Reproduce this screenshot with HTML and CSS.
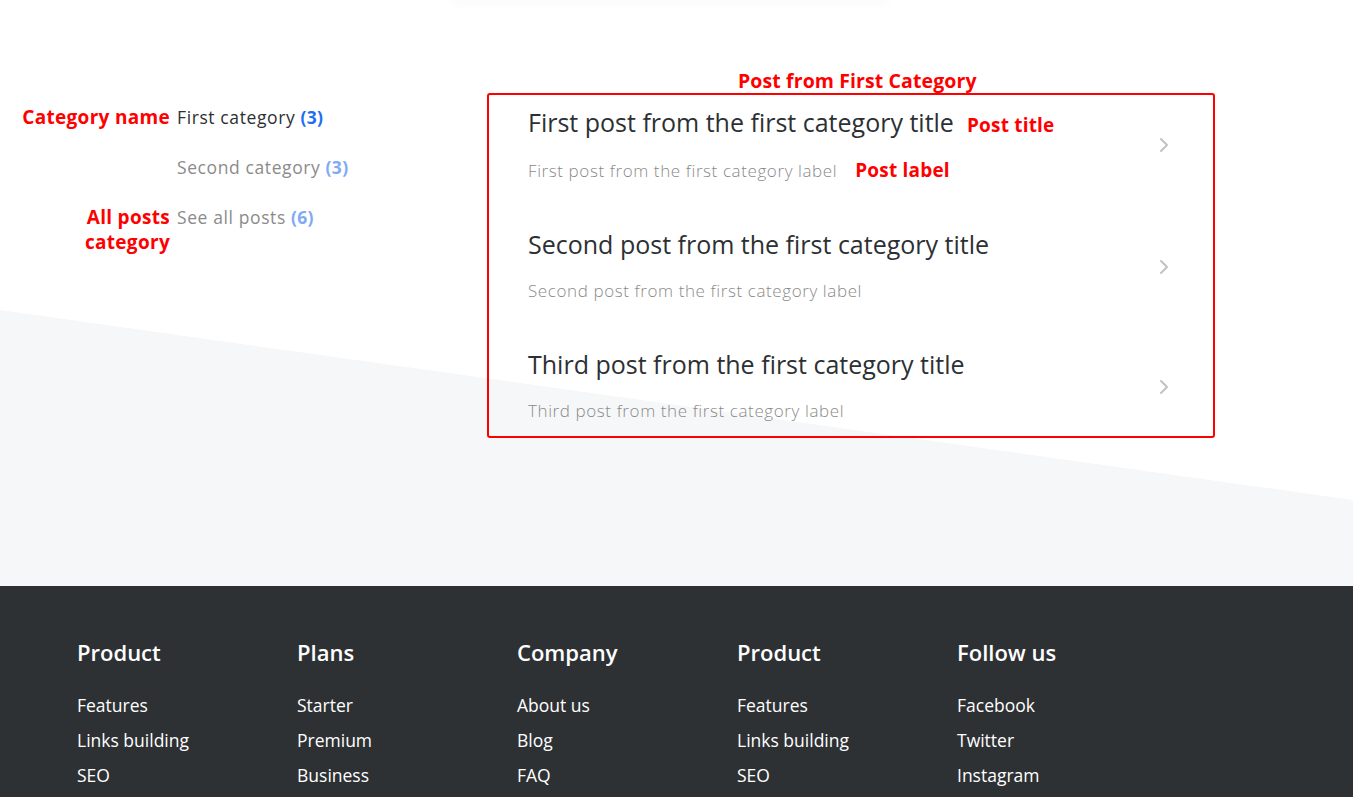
FILE: index.html
```html
<!DOCTYPE html>
<html lang="en">
<head>
<meta charset="utf-8">
<title>Blog categories</title>
<link rel="stylesheet" href="styles.css">
</head>
<body>
<main class="page">
  <div class="top-shadow"></div>
  <section class="blog">
    <aside class="cats">
      <div class="note">Category name</div>
      <a class="cat active" href="#">First category <span class="count">(3)</span></a>
      <div class="note"></div>
      <a class="cat" href="#">Second category <span class="count">(3)</span></a>
      <div class="note">All posts<br>category</div>
      <a class="cat" href="#">See all posts <span class="count">(6)</span></a>
    </aside>
    <div class="posts-wrap">
      <div class="note posts-note">Post from First Category</div>
      <div class="posts">
        <a class="post" href="#">
          <div class="post-text">
            <div class="post-title">First post from the first category title<span class="note inline-note">Post title</span></div>
            <div class="post-label">First post from the first category label<span class="note inline-note label-note">Post label</span></div>
          </div>
          <svg class="chev" width="10" height="16" viewBox="0 0 10 16"><path d="M2 2 L8 8 L2 14" fill="none" stroke="#c2c2c2" stroke-width="2" stroke-linecap="round" stroke-linejoin="round"/></svg>
        </a>
        <a class="post" href="#">
          <div class="post-text">
            <div class="post-title">Second post from the first category title</div>
            <div class="post-label">Second post from the first category label</div>
          </div>
          <svg class="chev" width="10" height="16" viewBox="0 0 10 16"><path d="M2 2 L8 8 L2 14" fill="none" stroke="#c2c2c2" stroke-width="2" stroke-linecap="round" stroke-linejoin="round"/></svg>
        </a>
        <a class="post" href="#">
          <div class="post-text">
            <div class="post-title">Third post from the first category title</div>
            <div class="post-label">Third post from the first category label</div>
          </div>
          <svg class="chev" width="10" height="16" viewBox="0 0 10 16"><path d="M2 2 L8 8 L2 14" fill="none" stroke="#c2c2c2" stroke-width="2" stroke-linecap="round" stroke-linejoin="round"/></svg>
        </a>
      </div>
    </div>
  </section>
</main>
<footer class="footer">
  <div class="fcol">
    <h3>Product</h3>
    <a href="#">Features</a>
    <a href="#">Links building</a>
    <a href="#">SEO</a>
  </div>
  <div class="fcol">
    <h3>Plans</h3>
    <a href="#">Starter</a>
    <a href="#">Premium</a>
    <a href="#">Business</a>
  </div>
  <div class="fcol">
    <h3>Company</h3>
    <a href="#">About us</a>
    <a href="#">Blog</a>
    <a href="#">FAQ</a>
  </div>
  <div class="fcol">
    <h3>Product</h3>
    <a href="#">Features</a>
    <a href="#">Links building</a>
    <a href="#">SEO</a>
  </div>
  <div class="fcol">
    <h3>Follow us</h3>
    <a href="#">Facebook</a>
    <a href="#">Twitter</a>
    <a href="#">Instagram</a>
  </div>
</footer>
</body>
</html>
```
FILE: styles.css
```css
* { box-sizing: border-box; }
html, body { margin: 0; padding: 0; }
body {
  font-family: "Open Sans", "Noto Sans", sans-serif;
  background: #ffffff;
  color: #2d3033;
  overflow: hidden;
}
a { text-decoration: none; color: inherit; }

.page {
  position: relative;
  height: 586px;
  overflow: hidden;
}
.page::before {
  content: "";
  position: absolute;
  inset: 0;
  background: #f6f7f9;
  clip-path: polygon(0 310px, 100% 500px, 100% 100%, 0 100%);
  z-index: 0;
}
.top-shadow {
  position: relative;
  z-index: 1;
  width: 440px;
  height: 6px;
  margin: -6px auto 0 450px;
  box-shadow: 0 4px 10px rgba(0,0,0,0.03);
  border-radius: 0 0 60px 60px;
}

.blog {
  position: relative;
  z-index: 1;
  display: flex;
  padding-top: 68px;
}

.note {
  color: #ff0000;
  font-weight: 700;
  font-size: 19.5px;
  line-height: 25px;
  letter-spacing: 0.1px;
}

.cats {
  display: grid;
  grid-template-columns: 170px auto;
  column-gap: 7px;
  row-gap: 25px;
  align-content: start;
  align-items: start;
  width: 487px;
  padding-top: 37px;
}
.cats .note { text-align: right; letter-spacing: 0.3px; font-size: 19px; }
.cat {
  font-size: 17.5px;
  line-height: 25px;
  font-weight: 500;
  letter-spacing: 0.6px;
  color: #8b8b8b;
}
.cat .count { color: #7eaaf6; font-weight: 700; letter-spacing: 0.3px; }
.cat.active { color: #2d3033; }
.cat.active .count { color: #1d6ff0; }

.posts-wrap {
  width: 728px;
  display: flex;
  flex-direction: column;
}
.posts-note {
  padding-left: 251px;
}
.posts {
  border: 2px solid #ff0000;
  border-radius: 3px;
  display: flex;
  flex-direction: column;
  gap: 34px;
  padding: 0 44px 13px 39px;
}
.post {
  display: flex;
  justify-content: space-between;
  align-items: flex-start;
  padding-top: 12px;
}
.post-title {
  font-size: 25px;
  line-height: 30px;
  font-weight: 500;
  color: #2d3033;
}
.post-label {
  margin-top: 20px;
  font-size: 17px;
  line-height: 24px;
  font-weight: 300;
  letter-spacing: 0.6px;
  color: #8a8a8a;
}
.inline-note { margin-left: 13px; letter-spacing: 0.2px; font-size: 19px; }
.post-label .label-note { margin-left: 18px; letter-spacing: 0.2px; }
.chev { margin-top: 30px; }

.footer {
  background: #2e3134;
  color: #ffffff;
  display: flex;
  padding: 52px 0 0 77px;
  height: 211px;
}
.fcol {
  width: 220px;
  display: flex;
  flex-direction: column;
}
.fcol h3 {
  margin: 0 0 22px;
  font-size: 22px;
  line-height: 28px;
  font-weight: 600;
}
.fcol a {
  font-size: 17.5px;
  line-height: 35px;
  font-weight: 400;
}
```
